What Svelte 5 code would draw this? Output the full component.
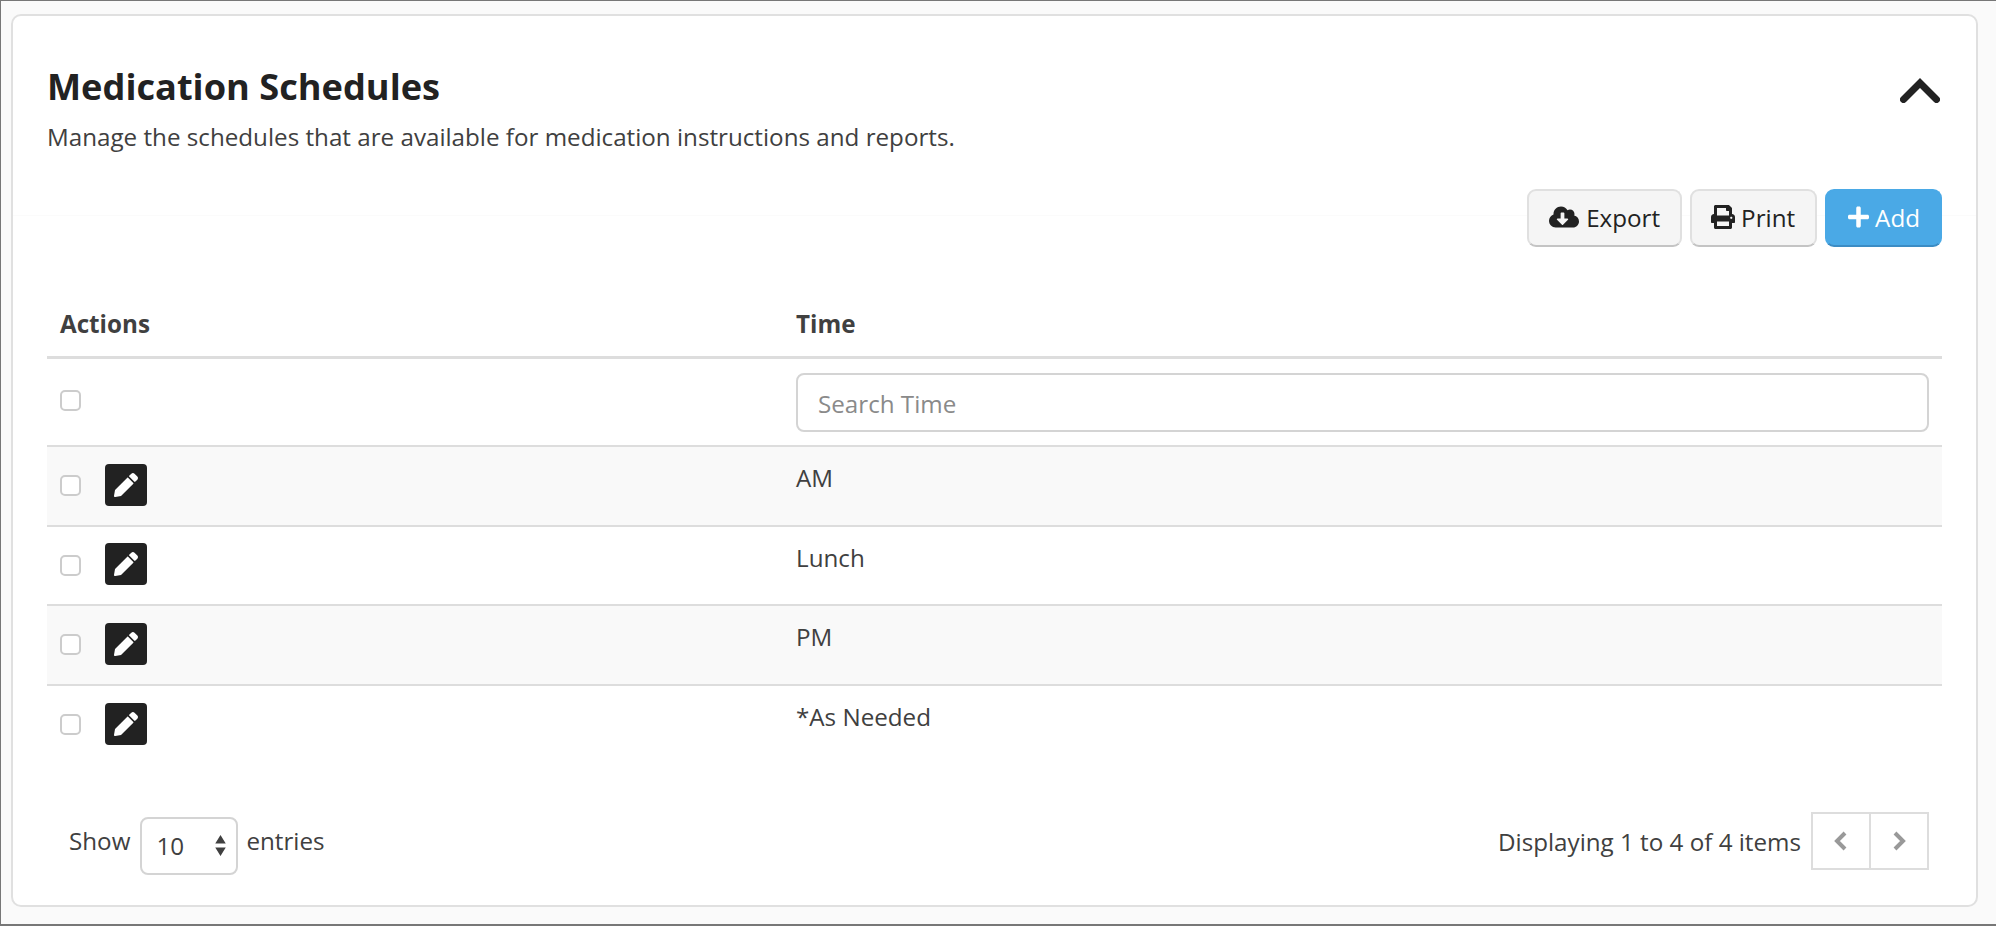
<script lang="ts">
  const rows = ['AM', 'Lunch', 'PM', '*As Needed'];
</script>

<div class="page">
  <section class="card">
    <header class="head">
      <div>
        <h1>Medication Schedules</h1>
        <p>Manage the schedules that are available for medication instructions and reports.</p>
      </div>
      <svg class="collapse" viewBox="0 0 40 25" aria-hidden="true">
        <polyline points="3.500,21.500 20,5 36.500,21.500" />
      </svg>
    </header>

    <div class="toolbar">
      <button class="btn export">
        <svg class="ic-export" viewBox="0 0 640 512"><path d="M537.6 226.6c4.1-10.7 6.4-22.4 6.4-34.6 0-53-43-96-96-96-19.7 0-38.1 6-53.3 16.2C367 64.2 315.3 32 256 32c-88.4 0-160 71.6-160 160 0 2.700.1 5.400.2 8.100C40.200 219.800 0 273.200 0 336c0 79.500 64.500 144 144 144h368c70.700 0 128-57.300 128-128 0-61.900-44-113.600-102.400-125.400zm-132.900 88.700L299.300 420.700c-6.200 6.200-16.400 6.200-22.600 0L171.300 315.300c-10.100-10.100-2.900-27.300 11.300-27.300H248V176c0-8.800 7.200-16 16-16h48c8.800 0 16 7.200 16 16v112h65.400c14.200 0 21.400 17.200 11.300 27.300z" /></svg>
        Export
      </button>
      <button class="btn print">
        <svg class="ic-print" viewBox="0 0 512 512"><path d="M448 192V77.250c0-8.490-3.370-16.620-9.370-22.630L393.370 9.370c-6-6-14.140-9.370-22.630-9.370H96C78.330 0 64 14.330 64 32v160c-35.350 0-64 28.650-64 64v112c0 8.840 7.160 16 16 16h48v96c0 17.670 14.330 32 32 32h320c17.670 0 32-14.330 32-32v-96h48c8.840 0 16-7.160 16-16V256c0-35.350-28.650-64-64-64zm-64 256H128v-96h256v96zm0-224H128V64h192v48c0 8.840 7.160 16 16 16h48v96zm48 72c-13.250 0-24-10.750-24-24 0-13.260 10.750-24 24-24s24 10.740 24 24c0 13.250-10.750 24-24 24z" /></svg>
        Print
      </button>
      <button class="btn primary">
        <svg class="ic-plus" viewBox="0 0 448 512"><path d="M416 208H272V64c0-17.670-14.330-32-32-32h-32c-17.670 0-32 14.330-32 32v144H32c-17.670 0-32 14.330-32 32v32c0 17.670 14.330 32 32 32h144v144c0 17.670 14.330 32 32 32h32c17.670 0 32-14.330 32-32V304h144c17.670 0 32-14.330 32-32v-32c0-17.670-14.330-32-32-32z" /></svg>
        Add
      </button>
    </div>

    <table>
      <colgroup>
        <col class="col-actions" />
        <col />
      </colgroup>
      <thead>
        <tr>
          <th>Actions</th>
          <th>Time</th>
        </tr>
      </thead>
      <tbody>
        <tr class="filter">
          <td><span class="check"></span></td>
          <td><div class="search">Search Time</div></td>
        </tr>
        {#each rows as row, i (row)}
          <tr class="item" class:odd={i % 2 === 0}>
            <td>
              <div class="actions">
                <span class="check"></span>
                <span class="edit">
                  <svg viewBox="0 0 512 512"><path d="M497.900 142.100l-46.100 46.100c-4.700 4.700-12.300 4.700-17 0l-111-111c-4.700-4.700-4.700-12.300 0-17l46.100-46.100c18.700-18.700 49.100-18.700 67.900 0l60.100 60.100c18.800 18.700 18.800 49.100 0 67.900zM284.200 99.800L21.600 362.400.4 483.900c-2.900 16.400 11.400 30.600 27.800 27.800l121.500-21.300 262.600-262.600c4.700-4.700 4.700-12.300 0-17l-111-111c-4.800-4.700-12.400-4.700-17.100 0z" /></svg>
                </span>
              </div>
            </td>
            <td class="value">{row}</td>
          </tr>
        {/each}
      </tbody>
    </table>

    <footer class="foot">
      <div class="show">
        <span>Show</span>
        <div class="select">
          <span>10</span>
          <svg viewBox="0 0 14 26"><path d="M7 0l6.500 10.500H.5zM7 26L.5 15.500h13z" /></svg>
        </div>
        <span>entries</span>
      </div>
      <div class="paging">
        <span>Displaying 1 to 4 of 4 items</span>
        <div class="pager">
          <span class="page-btn"><svg viewBox="0 0 14 22"><polyline points="11,3 3,11 11,19" /></svg></span>
          <span class="page-btn"><svg viewBox="0 0 14 22"><polyline points="3,3 11,11 3,19" /></svg></span>
        </div>
      </div>
    </footer>
  </section>
</div>

<style>
  :global(body) { margin: 0; background: #fafafa; }
  .page {
    box-sizing: border-box; height: 926px; padding: 13px 18px 16px 10px;
    background: #fafafa;
    border-top: 1px solid #777; border-left: 1px solid #777; border-bottom: 2px solid #777;
    font-family: "Open Sans", sans-serif; color: #404040; font-size: 24.2px;
  }
  .card {
    box-sizing: border-box; height: 893px; padding: 0 34px;
    background: #fff; border: 2px solid #e0e0e0; border-radius: 10px;
  }
  .head { display: flex; justify-content: space-between; padding-top: 45px; height: 130px; box-sizing: border-box; }
  h1 { margin: 0; font-size: 36.2px; line-height: 50px; font-weight: 700; color: #222; }
  p { margin: 9px 0 0; font-size: 24.2px; line-height: 34px; }
  .collapse { width: 40px; height: 25px; margin: 17px 2px 0 0; }
  .collapse polyline { fill: none; stroke: #222; stroke-width: 7px; stroke-linecap: round; stroke-linejoin: miter; }

  .toolbar {
    display: flex; justify-content: flex-end; gap: 8px; margin: 43px -34px 0; padding: 0 34px;
    background: linear-gradient(#fbfbfb, #fbfbfb) 0 26px / 100% 1px no-repeat;
  }
  .btn {
    display: flex; align-items: center; gap: 6px; height: 58px; padding: 0 20px 2px;
    background: #f5f5f5; border: 2px solid #e0e0e0; border-bottom-color: #c4c4c4; border-radius: 9px;
    font: 400 24.2px "Open Sans", sans-serif; color: #222;
  }
  .btn svg { fill: #222; }
  .btn.export { gap: 7px; }
  .btn.print { padding-left: 19px; }
  .btn.primary { background: #4aa9e6; border-color: #4aa9e6; border-bottom-color: #3b8cc4; color: #fff; padding-left: 21px; }
  .btn.primary svg { fill: #fff; }
  .ic-export { width: 30px; height: 24px; }
  .ic-print { width: 24px; height: 24px; }
  .ic-plus { width: 21px; height: 24px; }

  table { width: 100%; border-collapse: separate; border-spacing: 0; table-layout: fixed; margin-top: 58px; }
  .col-actions { width: 736px; }
  th {
    box-sizing: border-box; height: 54px; padding: 1px 13px 0; vertical-align: top; line-height: 36px;
    text-align: left; font-size: 24.2px; font-weight: 700; color: #404040; border-bottom: 3px solid #ddd;
  }
  td { box-sizing: border-box; padding: 0 13px; border-bottom: 2px solid #ddd; }
  .filter td { height: 88px; }
  .filter td:first-child { vertical-align: top; padding-top: 31px; }
  .item td { height: 79.6px; }
  .item:last-child td { border-bottom-color: transparent; }
  .odd { background: #f9f9f9; }
  .value { vertical-align: top; padding-top: 13px; line-height: 36px; }
  .check {
    display: block; box-sizing: border-box; width: 21px; height: 21px;
    background: #fff; border: 2px solid #ccc; border-radius: 5px;
  }
  .actions { display: flex; align-items: center; gap: 24px; }
  .edit {
    display: flex; align-items: center; justify-content: center; width: 42px; height: 42px; margin-top: -2px;
    background: #222; border-radius: 4px;
  }
  .edit svg { width: 24px; height: 24px; fill: #fff; }
  .search {
    box-sizing: border-box; height: 59px; padding: 2px 20px 0; display: flex; align-items: center;
    border: 2px solid #d4d4d4; border-radius: 8px; color: #8a8a8a; background: #fff;
  }

  .foot { display: flex; justify-content: space-between; align-items: center; padding: 0 13px 0 22px; margin-top: 40px; }
  .show { display: flex; align-items: center; gap: 9px; }
  .select {
    box-sizing: border-box; width: 98px; height: 58px; margin: 12px -1px 0 1px; padding: 0 9px 2px 14px;
    display: flex; align-items: center; justify-content: space-between;
    border: 2px solid #d4d4d4; border-radius: 8px;
  }
  .select svg { width: 13px; height: 21px; fill: #404040; }
  .paging { display: flex; align-items: center; gap: 10px; margin-top: 2px; }
  .pager { display: flex; border: 2px solid #ddd; }
  .page-btn { display: flex; align-items: center; justify-content: center; width: 56px; height: 54px; }
  .page-btn + .page-btn { border-left: 2px solid #ddd; }
  .page-btn svg { width: 14px; height: 22px; }
  .page-btn polyline { fill: none; stroke: #999; stroke-width: 4px; stroke-linejoin: miter; }
</style>
